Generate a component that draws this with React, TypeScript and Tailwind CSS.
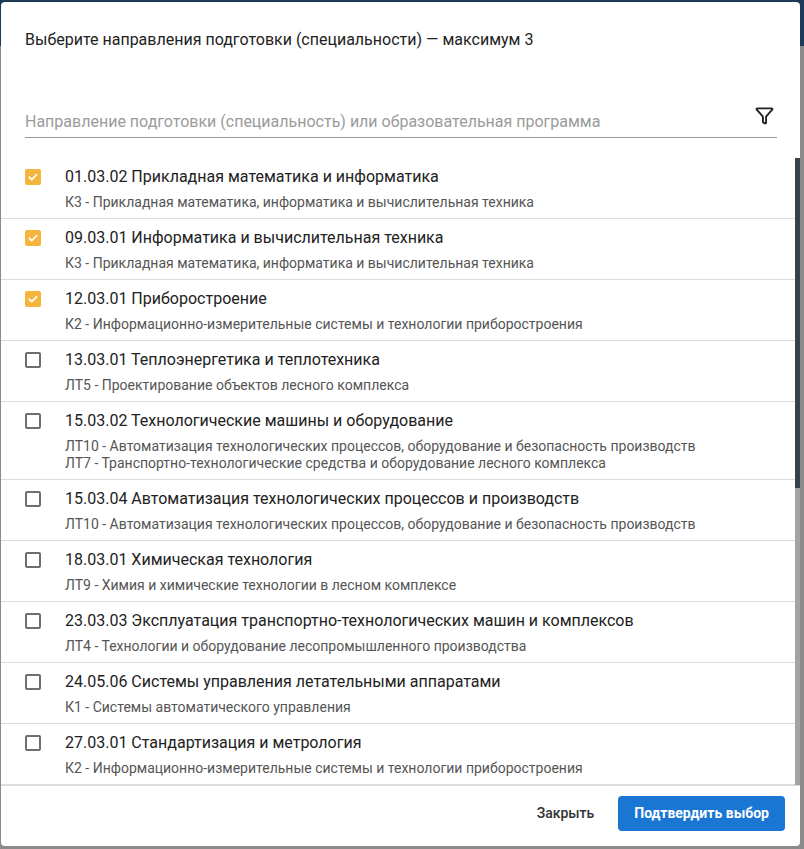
import * as React from "react";
import { Funnel } from "lucide-react";

interface Program {
    code: string;
    name: string;
    units: string[];
    checked: boolean;
}

const programs: Program[] = [
    { code: "01.03.02", name: "Прикладная математика и информатика", units: ["К3 - Прикладная математика, информатика и вычислительная техника"], checked: true },
    { code: "09.03.01", name: "Информатика и вычислительная техника", units: ["К3 - Прикладная математика, информатика и вычислительная техника"], checked: true },
    { code: "12.03.01", name: "Приборостроение", units: ["К2 - Информационно-измерительные системы и технологии приборостроения"], checked: true },
    { code: "13.03.01", name: "Теплоэнергетика и теплотехника", units: ["ЛТ5 - Проектирование объектов лесного комплекса"], checked: false },
    {
        code: "15.03.02", name: "Технологические машины и оборудование", units: [
            "ЛТ10 - Автоматизация технологических процессов, оборудование и безопасность производств",
            "ЛТ7 - Транспортно-технологические средства и оборудование лесного комплекса",
        ], checked: false
    },
    { code: "15.03.04", name: "Автоматизация технологических процессов и производств", units: ["ЛТ10 - Автоматизация технологических процессов, оборудование и безопасность производств"], checked: false },
    { code: "18.03.01", name: "Химическая технология", units: ["ЛТ9 - Химия и химические технологии в лесном комплексе"], checked: false },
    { code: "23.03.03", name: "Эксплуатация транспортно-технологических машин и комплексов", units: ["ЛТ4 - Технологии и оборудование лесопромышленного производства"], checked: false },
    { code: "24.05.06", name: "Системы управления летательными аппаратами", units: ["К1 - Системы автоматического управления"], checked: false },
    { code: "27.03.01", name: "Стандартизация и метрология", units: ["К2 - Информационно-измерительные системы и технологии приборостроения"], checked: false },
];

function Checkbox({ checked }: { checked: boolean }) {
    if (checked) {
        return <div className="w-4 h-4 rounded-[2px] bg-[#f5b43c] flex items-center justify-center shrink-0">
            <svg width="12" height="12" viewBox="0 0 12 12" fill="none">
                <path d="M2.2 6.2l2.5 2.4 5-5" stroke="white" strokeWidth="1.6" strokeLinecap="round" strokeLinejoin="round" />
            </svg>
        </div>;
    }
    return <div className="w-4 h-4 rounded-[2px] border-2 border-[#6e6e6e] shrink-0" />;
}

export default function App() {
    return <div className="w-[804px] h-[849px] pt-[2px] pl-[1px] bg-[linear-gradient(#1c3a58_0_46px,#8b8b8b_46px)] font-['Roboto',sans-serif]">
        <div className="w-[799px] h-[844px] bg-white rounded-[4px] overflow-hidden flex flex-col">
            <div className="px-[24px] pt-[27px] text-[16px] leading-[22px] text-[#222]">
                Выберите направления подготовки (специальности) — максимум 3
            </div>
            <div className="mt-[49px] ml-[24px] mr-[23px] h-[38px] border-b border-[#9a9a9a] flex items-end justify-between pb-[3px]">
                <span className="text-[16px] leading-[24px] text-[#9b9b9b]">
                    Направление подготовки (специальность) или образовательная программа
                </span>
                <Funnel size={19} strokeWidth={2.4} className="text-[#222] mb-[9px] mr-[3px]" />
            </div>
            <div className="mt-[20px] flex-1 min-h-0 flex">
                <div className="flex-1 overflow-hidden">
                    {programs.map(p =>
                        <div key={p.code} className="flex gap-[24px] pl-[24px] pt-[9px] pb-[7px] border-b border-[#dcdcdc]">
                            <div className="pt-[2px]">
                                <Checkbox checked={p.checked} />
                            </div>
                            <div>
                                <div className="text-[16px] leading-[20px] text-[#222]">{p.code} {p.name}</div>
                                <div className="mt-[7px] text-[14px] leading-[17px] text-[#555]">
                                    {p.units.map(u => <div key={u}>{u}</div>)}
                                </div>
                            </div>
                        </div>
                    )}
                </div>
                <div className="w-[5px] bg-[#a3a3a3] flex flex-col">
                    <div className="h-[330px] bg-[#36434e]" />
                </div>
            </div>
            <div className="h-[61px] border-t border-[#dcdcdc] flex items-start justify-end gap-[24px] pt-[10px] pr-[15px]">
                <button className="h-[35px] text-[14px] font-medium text-[#333]">Закрыть</button>
                <button className="h-[35px] px-[16px] rounded-[4px] bg-[#1976d2] text-white text-[14px] font-bold">
                    Подтвердить выбор
                </button>
            </div>
        </div>
    </div>;
}
